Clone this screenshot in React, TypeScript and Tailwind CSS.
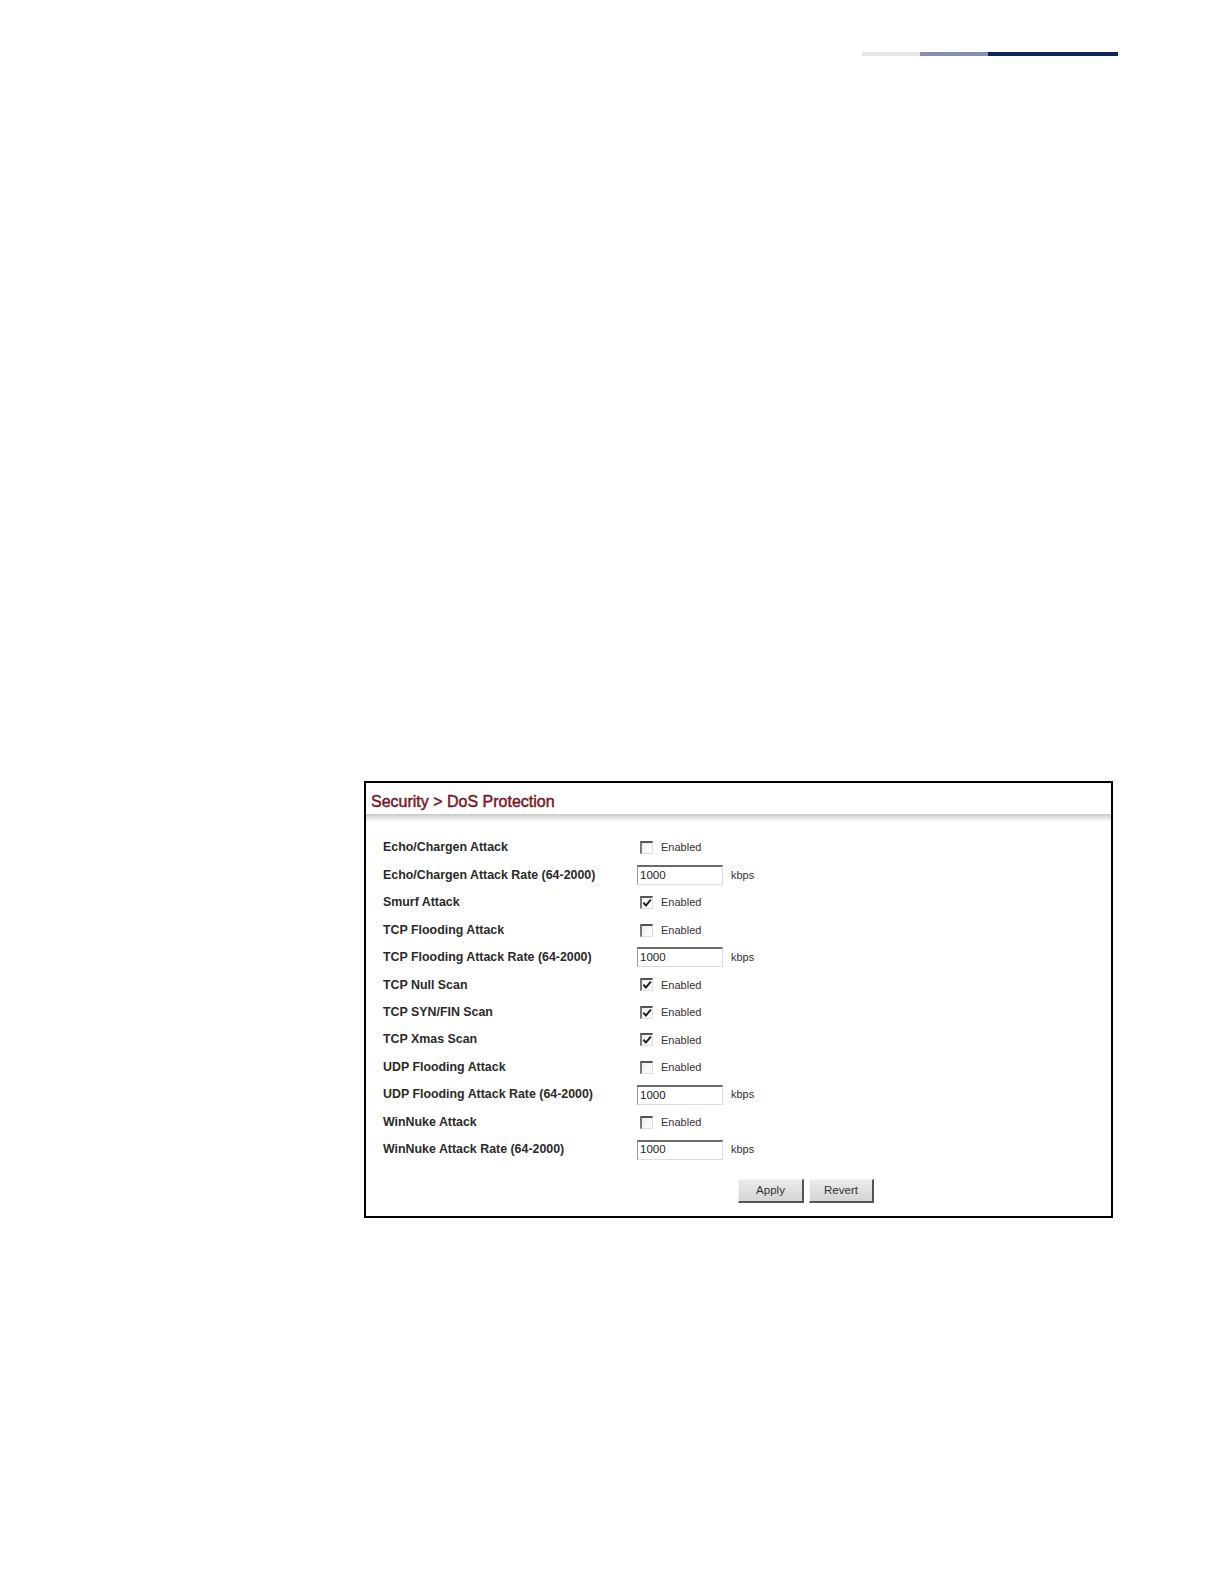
import React from "react";

type Row =
  | { label: string; kind: "check"; checked: boolean }
  | { label: string; kind: "rate"; value: string };

const rows: Row[] = [
  { label: "Echo/Chargen Attack", kind: "check", checked: false },
  { label: "Echo/Chargen Attack Rate (64-2000)", kind: "rate", value: "1000" },
  { label: "Smurf Attack", kind: "check", checked: true },
  { label: "TCP Flooding Attack", kind: "check", checked: false },
  { label: "TCP Flooding Attack Rate (64-2000)", kind: "rate", value: "1000" },
  { label: "TCP Null Scan", kind: "check", checked: true },
  { label: "TCP SYN/FIN Scan", kind: "check", checked: true },
  { label: "TCP Xmas Scan", kind: "check", checked: true },
  { label: "UDP Flooding Attack", kind: "check", checked: false },
  { label: "UDP Flooding Attack Rate (64-2000)", kind: "rate", value: "1000" },
  { label: "WinNuke Attack", kind: "check", checked: false },
  { label: "WinNuke Attack Rate (64-2000)", kind: "rate", value: "1000" },
];

function CheckBox({ checked }: { checked: boolean }) {
  return (
    <span className="relative ml-[3px] inline-block h-[13px] w-[13px] border-t-2 border-l-2 border-r border-b border-t-[#555] border-l-[#777] border-r-[#dedede] border-b-[#dedede] bg-gradient-to-br from-[#eeeeee] to-white">
      {checked && (
        <svg
          viewBox="0 0 10 10"
          className="absolute left-[0px] top-[0px] h-[10px] w-[10px]"
        >
          <path
            d="M1.4 4.6 L3.9 7.6 L8.8 1.6"
            fill="none"
            stroke="#1a1a1a"
            strokeWidth="1.9"
          />
        </svg>
      )}
    </span>
  );
}

function Btn({ children, w }: { children: React.ReactNode; w: string }) {
  return (
    <div
      className={`${w} flex h-[24px] items-center justify-center border-t border-l border-r-2 border-b-2 border-t-[#f4f4f4] border-l-[#f4f4f4] border-r-[#555] border-b-[#555] bg-gradient-to-b from-[#ececec] to-[#d4d4d4] text-[11.5px] text-[#333]`}
    >
      {children}
    </div>
  );
}

export default function App() {
  return (
    <div
      className="relative h-[1584px] w-[1224px] bg-white"
      style={{ fontFamily: '"Liberation Sans", Arial, sans-serif' }}
    >
      <div className="flex justify-end pr-[106px] pt-[52px]">
        <div className="h-[4px] w-[58px] bg-[#e6e6ea]" />
        <div className="h-[4px] w-[68px] bg-[#8790b0]" />
        <div className="h-[4px] w-[130px] bg-[#0b2462]" />
      </div>

      <div className="ml-[364px] mt-[725px] h-[437px] w-[749px] border-2 border-black">
        <div className="flex h-[31px] items-end pl-[5px] pb-[0px] text-[16px] text-[#7a1424]">
          <span className="[-webkit-text-stroke:0.45px_#7a1424]">Security &gt; DoS Protection</span>
        </div>
        <div className="h-[8px] bg-gradient-to-b from-[#c8c8c8] via-[#e6e6e6] to-white" />
        <div className="pl-[17px] pt-[12px]">
          {rows.map((r) => (
            <div key={r.label} className="flex h-[27.45px] items-center">
              <div className="w-[254px] text-[12.4px] font-bold text-[#2a2a2a]">
                {r.label}
              </div>
              {r.kind === "check" ? (
                <div className="flex items-center">
                  <CheckBox checked={r.checked} />
                  <span className="ml-[8px] text-[11px] text-[#333]">Enabled</span>
                </div>
              ) : (
                <div className="flex items-center">
                  <div className="flex h-[20px] w-[86px] items-center border-t-2 border-l border-r border-b border-t-[#6a6a6a] border-l-[#9a9a9a] border-r-[#dcdcdc] border-b-[#dcdcdc] bg-white pl-[2px] text-[11.5px] text-[#222]">
                    {r.value}
                  </div>
                  <span className="ml-[8px] text-[11px] text-[#333]">kbps</span>
                </div>
              )}
            </div>
          ))}
        </div>
        <div className="ml-[372px] mt-[16px] flex gap-[5px]">
          <Btn w="w-[66px]">Apply</Btn>
          <Btn w="w-[65px]">Revert</Btn>
        </div>
      </div>
    </div>
  );
}
